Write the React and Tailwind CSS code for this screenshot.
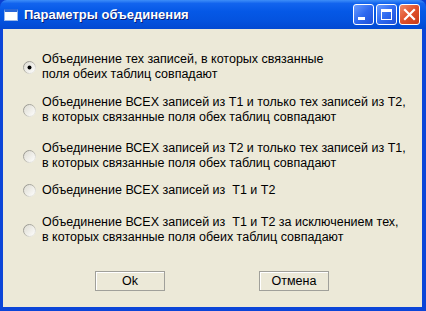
import React from "react";

const options = [
  { lines: ["Объединение тех записей, в которых связанные", "поля обеих таблиц совпадают"], checked: true, mt: "mt-0" },
  { lines: ["Объединение ВСЕХ записей из T1 и только тех записей из T2,", "в которых связанные поля обех таблиц совпадают"], mt: "mt-[13px]" },
  { lines: ["Объединение ВСЕХ записей из T2 и только тех записей из T1,", "в которых связанные поля обех таблиц совпадают"], mt: "mt-[16px]" },
  { lines: ["Объединение ВСЕХ записей из  T1 и T2"], mt: "mt-[12px]" },
  { lines: ["Объединение ВСЕХ записей из  T1 и T2 за исключением тех,", "в которых связанные поля обеих таблиц совпадают"], mt: "mt-[17px]" },
];

function Radio({ checked }) {
  return (
    <svg width="13" height="13" viewBox="0 0 13 13" className="shrink-0">
      <defs>
        <linearGradient id="rring" x1="0" y1="0" x2="1" y2="1">
          <stop offset="0" stopColor="#8a8a84" />
          <stop offset="0.5" stopColor="#b8b6ac" />
          <stop offset="1" stopColor="#ffffff" />
        </linearGradient>
        <linearGradient id="rfill" x1="0" y1="0" x2="1" y2="1">
          <stop offset="0" stopColor="#dcdad0" />
          <stop offset="1" stopColor="#ffffff" />
        </linearGradient>
      </defs>
      <circle cx="6.5" cy="6.5" r="6" fill="url(#rfill)" stroke="url(#rring)" strokeWidth="1" />
      {checked && <circle cx="6.5" cy="6.5" r="2" fill="#000" />}
    </svg>
  );
}

function CapButton({ kind }) {
  const isClose = kind === "close";
  return (
    <div
      className={
        "w-[21px] h-[21px] rounded-[3px] border border-white flex items-center justify-center " +
        (isClose
          ? "bg-[linear-gradient(135deg,#f08a68_0%,#e0502a_50%,#c83a18_100%)]"
          : "bg-[linear-gradient(135deg,#6a9cff_0%,#2f6af0_50%,#1f4fd8_100%)]")
      }
    >
      {kind === "min" && <div className="w-[7px] h-[3px] bg-white mt-[8px] -ml-[4px]" />}
      {kind === "max" && <div className="w-[11px] h-[11px] border border-white border-t-[3px]" />}
      {isClose && (
        <svg width="13" height="13" viewBox="0 0 13 13">
          <path d="M2 2L11 11M11 2L2 11" stroke="#fff" strokeWidth="2.2" strokeLinecap="square" />
        </svg>
      )}
    </div>
  );
}

export default function App() {
  return (
    <div className="w-[426px] h-[311px] flex flex-col font-['Liberation_Sans',Arial,sans-serif] text-[12.5px] text-black bg-[#0a3fd0]">
      <div className="h-[29px] shrink-0 flex items-center pl-[4px] pr-[6px] rounded-t-[7px] bg-[linear-gradient(180deg,#3e8ef8_0%,#1264ee_12%,#0558e6_40%,#0453df_70%,#0349d2_100%)]">
        <div className="w-[14px] h-[12px] bg-white border border-[#9ab8e8] border-t-[3px] border-t-[#2a68d8] shrink-0" />
        <span className="ml-[6px] text-white font-bold text-[13px] [text-shadow:1px_1px_0_#0a1f7a]">
          Параметры объединения
        </span>
        <div className="ml-auto flex gap-[2px]">
          <CapButton kind="min" />
          <CapButton kind="max" />
          <CapButton kind="close" />
        </div>
      </div>
      <div className="flex-1 flex flex-col bg-[#ece9d8] border-l-[3px] border-r-[4px] border-b-[4px] border-[#0b45d8] pl-[20px] pt-[23px]">
        {options.map((o, i) => (
          <div key={i} className={"flex items-center gap-[6px] " + o.mt}>
            <Radio checked={o.checked} />
            <div className="leading-[15px]">
              {o.lines.map((l, j) => (
                <div key={j} className="whitespace-pre">{l}</div>
              ))}
            </div>
          </div>
        ))}
        <div className="mt-[26px] flex pl-[72px] gap-[94px]">
          <button className="w-[70px] h-[20px] border border-[#a0a09a] shadow-[inset_1px_1px_0_#fff] bg-[#ece9d8] text-[12.5px]">
            Ok
          </button>
          <button className="w-[70px] h-[20px] border border-[#a0a09a] shadow-[inset_1px_1px_0_#fff] bg-[#ece9d8] text-[12.5px]">
            Отмена
          </button>
        </div>
      </div>
    </div>
  );
}
